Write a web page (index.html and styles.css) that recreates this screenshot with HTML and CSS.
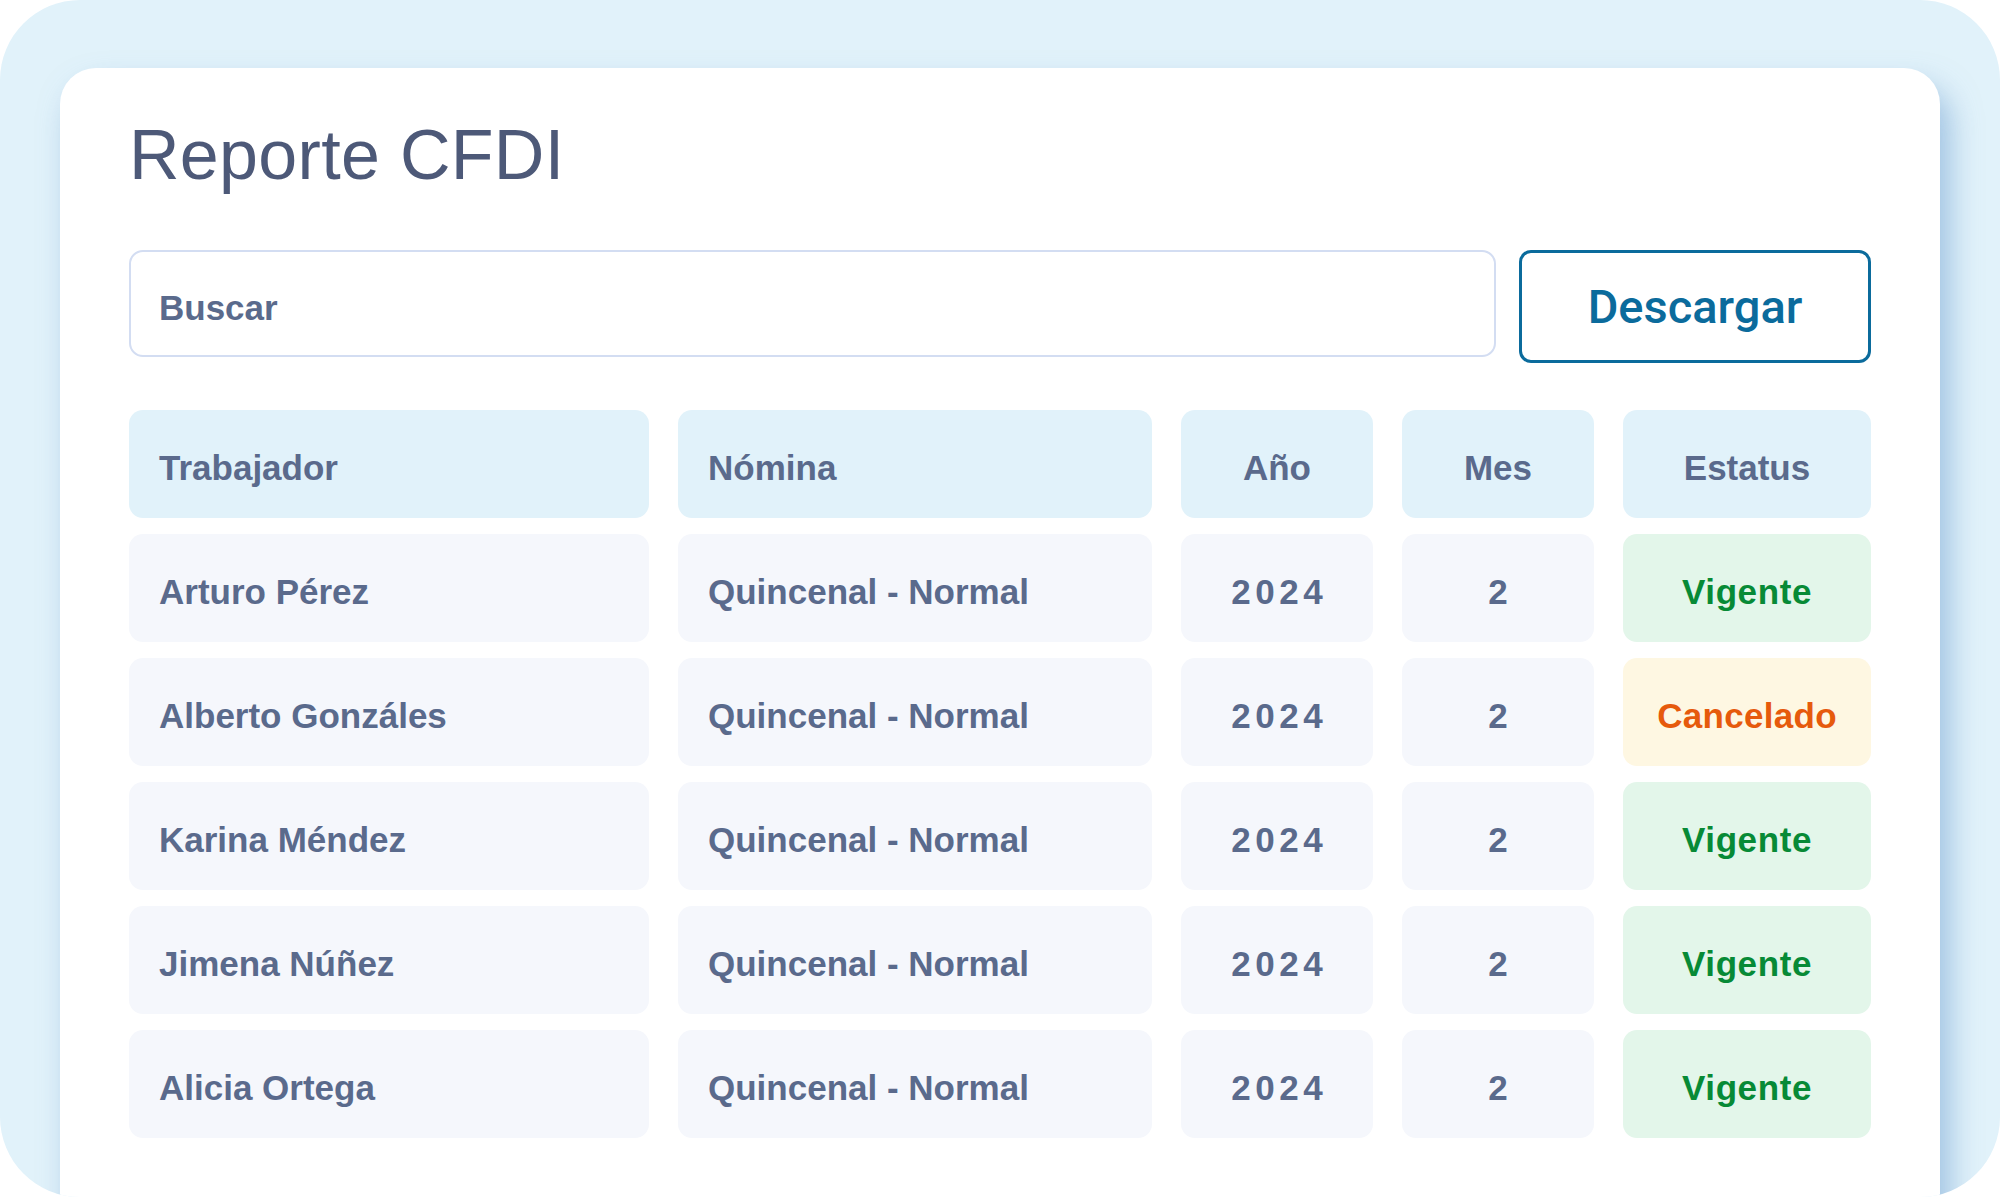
FILE: index.html
```html
<!DOCTYPE html>
<html lang="es">
<head>
<meta charset="utf-8">
<title>Reporte CFDI</title>
<link rel="stylesheet" href="styles.css">
</head>
<body>
<div class="frame">
  <div class="card">
    <h1 class="title">Reporte CFDI</h1>
    <div class="toolbar">
      <input class="search" type="text" placeholder="Buscar">
      <button class="download" type="button">Descargar</button>
    </div>
    <div class="table">
      <div class="cell head left">Trabajador</div>
      <div class="cell head left">Nómina</div>
      <div class="cell head center">Año</div>
      <div class="cell head center">Mes</div>
      <div class="cell head center">Estatus</div>

      <div class="cell left">Arturo Pérez</div>
      <div class="cell left">Quincenal - Normal</div>
      <div class="cell center year">2024</div>
      <div class="cell center">2</div>
      <div class="cell center ok">Vigente</div>

      <div class="cell left">Alberto Gonzáles</div>
      <div class="cell left">Quincenal - Normal</div>
      <div class="cell center year">2024</div>
      <div class="cell center">2</div>
      <div class="cell center cancel">Cancelado</div>

      <div class="cell left">Karina Méndez</div>
      <div class="cell left">Quincenal - Normal</div>
      <div class="cell center year">2024</div>
      <div class="cell center">2</div>
      <div class="cell center ok">Vigente</div>

      <div class="cell left">Jimena Núñez</div>
      <div class="cell left">Quincenal - Normal</div>
      <div class="cell center year">2024</div>
      <div class="cell center">2</div>
      <div class="cell center ok">Vigente</div>

      <div class="cell left">Alicia Ortega</div>
      <div class="cell left">Quincenal - Normal</div>
      <div class="cell center year">2024</div>
      <div class="cell center">2</div>
      <div class="cell center ok">Vigente</div>
    </div>
  </div>
</div>
</body>
</html>
```

FILE: styles.css
```css
html, body {
  margin: 0;
  padding: 0;
  background: #ffffff;
}

body {
  width: 2000px;
  height: 1200px;
  overflow: hidden;
  font-family: "Liberation Sans", Arial, sans-serif;
}

.frame {
  box-sizing: border-box;
  width: 2000px;
  height: 1197px;
  background: #e1f2fa;
  border-radius: 80px;
  overflow: hidden;
  padding: 68px 0 0 60px;
}

.card {
  box-sizing: border-box;
  width: 1880px;
  height: 1240px;
  background: #ffffff;
  border-radius: 36px;
  box-shadow: 10px 18px 30px rgba(105, 155, 205, 0.55);
  padding: 47px 69px 0 69px;
}

.title {
  margin: 0;
  font-family: "Liberation Sans", Arial, sans-serif;
  font-weight: 400;
  font-size: 70px;
  line-height: 80px;
  color: #4d5978;
  letter-spacing: 0.3px;
}

.toolbar {
  display: flex;
  align-items: flex-start;
  gap: 23px;
  margin-top: 55px;
}

.search {
  box-sizing: border-box;
  width: 1367px;
  height: 107px;
  margin: 0;
  border: 2px solid #d3ddf2;
  border-radius: 14px;
  padding: 8px 0 0 28px;
  background: #ffffff;
  font-family: "Liberation Sans", Arial, sans-serif;
  font-weight: 700;
  font-size: 35px;
  color: #5a6a8c;
  outline: none;
}

.search::placeholder {
  color: #5a6a8c;
  opacity: 1;
}

.download {
  box-sizing: border-box;
  width: 352px;
  height: 113px;
  margin: 0;
  border: 3px solid #0b6b9c;
  border-radius: 12px;
  background: #ffffff;
  font-family: Roboto, "Liberation Sans", sans-serif;
  font-weight: 500;
  font-size: 47px;
  color: #0b6b9c;
  padding: 0;
  cursor: pointer;
}

.table {
  display: grid;
  grid-template-columns: 520px 474px 192px 192px 248px;
  grid-auto-rows: 108px;
  column-gap: 29px;
  row-gap: 16px;
  margin-top: 47px;
}

.cell {
  box-sizing: border-box;
  display: flex;
  align-items: center;
  padding-top: 8px;
  background: #f5f7fc;
  border-radius: 14px;
  font-family: "Liberation Sans", Arial, sans-serif;
  font-weight: 700;
  font-size: 35px;
  color: #5a6a8c;
  white-space: nowrap;
}

.cell.head {
  background: #e1f2fa;
}

.cell.left {
  padding-left: 30px;
}

.cell.center {
  justify-content: center;
}

.cell.year {
  letter-spacing: 4.5px;
  padding-left: 4.5px;
}

.cell.ok {
  background: #e3f6ea;
  color: #078a36;
  letter-spacing: 0.6px;
}

.cell.cancel {
  background: #fef7e2;
  color: #e65a0c;
  letter-spacing: 0.3px;
}
```
